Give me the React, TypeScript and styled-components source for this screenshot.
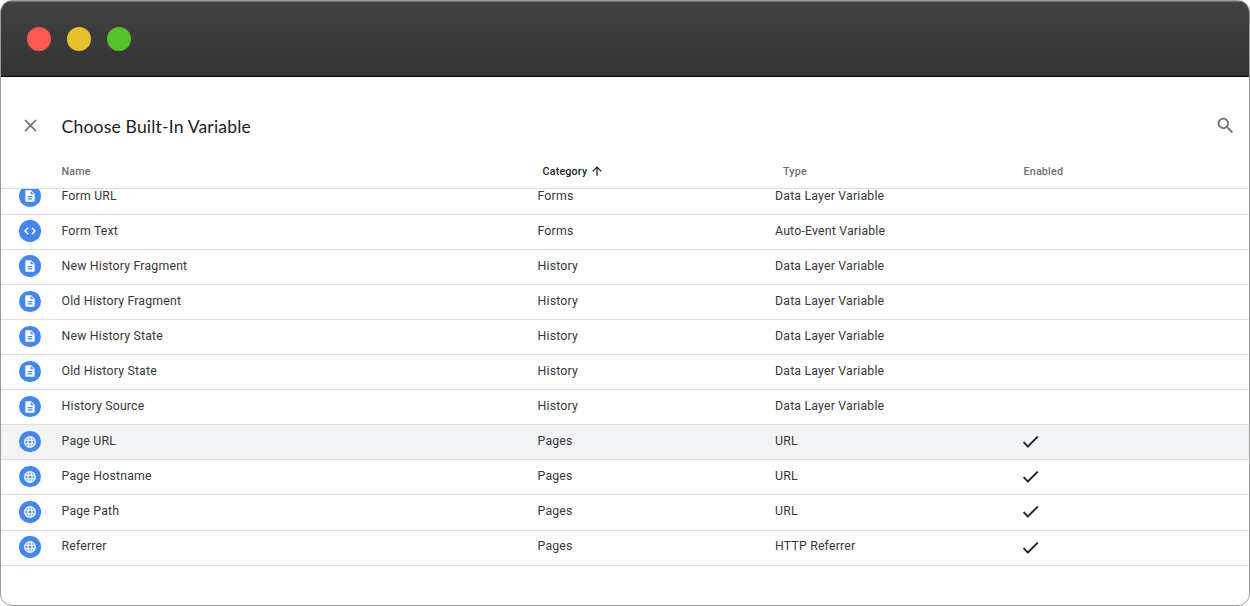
import React from "react";
import styled, { createGlobalStyle } from "styled-components";

const GlobalStyle = createGlobalStyle`
  *, *::before, *::after { box-sizing: border-box; }
  body { margin: 0; background: #fff; font-family: Roboto, sans-serif; }
`;

const Window = styled.div`
  display: flex;
  flex-direction: column;
  width: 1250px;
  height: 606px;
  border: 1px solid #9b9b9b;
  border-radius: 12px;
  background: #fff;
  overflow: hidden;
`;

const TitleBar = styled.div`
  display: flex;
  align-items: center;
  gap: 16px;
  height: 76px;
  flex: none;
  padding: 0 26px;
  background: linear-gradient(#424242, #333);
  border-bottom: 1px solid #000;
  box-shadow: inset 0 1px 0 #6e6f6e;
`;

const Light = styled.span<{ $color: string }>`
  width: 24px;
  height: 24px;
  border-radius: 50%;
  background: ${(p) => p.$color};
`;

const PanelHeader = styled.header`
  display: flex;
  align-items: center;
  height: 77px;
  flex: none;
  padding: 20px 13px 0 18.5px;
`;

const IconButton = styled.button`
  display: flex;
  padding: 0;
  border: 0;
  background: none;
  color: #757575;
`;

const Title = styled.h1`
  flex: 1;
  margin: 3px 0 0 21px;
  font: 400 17.6px/24px Lato, sans-serif;
  letter-spacing: 0.16px;
  color: #202124;
`;

const HeadRow = styled.div`
  display: grid;
  grid-template-columns: 60.5px 481px 240.5px 240.5px 1fr;
  height: 35px;
  flex: none;
  border-bottom: 1px solid #dadce0;
`;

const HeadCell = styled.div<{ $active?: boolean }>`
  display: flex;
  align-items: center;
  gap: 3px;
  font-size: 10.7px;
  font-weight: 500;
  letter-spacing: 0.2px;
  color: ${(p) => (p.$active ? "#202124" : "#6b6f73")};
`;

const Body = styled.div`
  flex: 1;
  overflow: hidden;
`;

const Rows = styled.div`
  margin-top: -9.4px;
`;

const Row = styled.div<{ $hover?: boolean }>`
  display: grid;
  grid-template-columns: 60.5px 476px 237.5px 244.5px 1fr;
  height: 35.1px;
  border-bottom: 1px solid #e0e0e0;
  background: ${(p) => (p.$hover ? "#f1f3f4" : "#fff")};
`;

const Cell = styled.div`
  padding-top: 6.9px;
  font-size: 12.3px;
  line-height: 18px;
  letter-spacing: 0.19px;
  color: #35383b;
  white-space: nowrap;
`;

const BadgeCell = styled.div`
  padding: 5.7px 0 0 18.3px;
`;

const Badge = styled.div`
  display: flex;
  align-items: center;
  justify-content: center;
  width: 21.4px;
  height: 21.4px;
  border-radius: 50%;
  background: #4285f4;
  color: #fff;
`;

const CheckCell = styled.div`
  padding-top: 6px;
  color: #202124;
`;

const paths = {
  doc: "M14 2H6c-1.1 0-2 .9-2 2v16c0 1.1.9 2 2 2h12c1.1 0 2-.9 2-2V8l-6-6zm2 16H8v-2h8v2zm0-4H8v-2h8v2zm-3-5V3.5L18.5 9H13z",
  code: "M9.4 16.6L4.8 12l4.6-4.6L8 6l-6 6 6 6 1.4-1.4zm5.2 0l4.6-4.6-4.6-4.6L16 6l6 6-6 6-1.4-1.4z",
  globe:
    "M11.99 2C6.47 2 2 6.48 2 12s4.47 10 9.99 10C17.52 22 22 17.52 22 12S17.52 2 11.99 2zm6.93 6h-2.95c-.32-1.25-.78-2.45-1.38-3.56 1.84.63 3.37 1.91 4.33 3.56zM12 4.04c.83 1.2 1.48 2.53 1.91 3.96h-3.82c.43-1.43 1.08-2.76 1.91-3.96zM4.26 14C4.1 13.36 4 12.69 4 12s.1-1.36.26-2h3.38c-.08.66-.14 1.32-.14 2s.06 1.34.14 2H4.26zm.82 2h2.95c.32 1.25.78 2.45 1.38 3.56-1.84-.63-3.37-1.9-4.33-3.56zm2.95-8H5.08c.96-1.66 2.49-2.93 4.33-3.56C8.81 5.55 8.35 6.75 8.03 8zM12 19.96c-.83-1.2-1.48-2.53-1.91-3.96h3.82c-.43 1.43-1.08 2.76-1.91 3.96zM14.34 14H9.66c-.09-.66-.16-1.32-.16-2s.07-1.35.16-2h4.68c.09.65.16 1.32.16 2s-.07 1.34-.16 2zm.25 5.56c.6-1.11 1.06-2.31 1.38-3.56h2.95c-.96 1.65-2.49 2.93-4.33 3.56zM16.36 14c.08-.66.14-1.32.14-2s-.06-1.34-.14-2h3.38c.16.64.26 1.31.26 2s-.1 1.36-.26 2h-3.38z",
  check: "M9 16.17L4.83 12l-1.42 1.41L9 19 21 7l-1.41-1.41z",
  close:
    "M19 6.41L17.59 5 12 10.59 6.41 5 5 6.41 10.59 12 5 17.59 6.41 19 12 13.41 17.59 19 19 17.59 13.41 12z",
  search:
    "M15.5 14h-.79l-.28-.27C15.41 12.59 16 11.11 16 9.5 16 5.91 13.09 3 9.5 3S3 5.91 3 9.5 5.91 16 9.5 16c1.61 0 3.09-.59 4.23-1.57l.27.28v.79l5 4.99L20.49 19l-4.99-5zm-6 0C7.01 14 5 11.99 5 9.5S7.01 5 9.5 5 14 7.01 14 9.5 11.99 14 9.5 14z",
  up: "M4 12l1.41 1.41L11 7.83V20h2V7.83l5.58 5.59L20 12l-8-8-8 8z",
};

type IconName = keyof typeof paths;

const Svg = styled.svg<{ $weight: number }>`
  display: block;
  flex: none;
  fill: currentColor;
  stroke: currentColor;
  stroke-width: ${(p) => p.$weight};
`;

const Icon = ({ name, size, weight = 0 }: { name: IconName; size: number; weight?: number }) => (
  <Svg width={size} height={size} viewBox="0 0 24 24" $weight={weight} aria-hidden="true">
    <path d={paths[name]} />
  </Svg>
);

const badgeWeights: Partial<Record<IconName, number>> = { code: 0.5, globe: 0.4 };

interface Variable {
  icon: IconName;
  name: string;
  category: string;
  type: string;
  enabled?: boolean;
  hover?: boolean;
}

const variables: Variable[] = [
  { icon: "doc", name: "Form URL", category: "Forms", type: "Data Layer Variable" },
  { icon: "code", name: "Form Text", category: "Forms", type: "Auto-Event Variable" },
  { icon: "doc", name: "New History Fragment", category: "History", type: "Data Layer Variable" },
  { icon: "doc", name: "Old History Fragment", category: "History", type: "Data Layer Variable" },
  { icon: "doc", name: "New History State", category: "History", type: "Data Layer Variable" },
  { icon: "doc", name: "Old History State", category: "History", type: "Data Layer Variable" },
  { icon: "doc", name: "History Source", category: "History", type: "Data Layer Variable" },
  { icon: "globe", name: "Page URL", category: "Pages", type: "URL", enabled: true, hover: true },
  { icon: "globe", name: "Page Hostname", category: "Pages", type: "URL", enabled: true },
  { icon: "globe", name: "Page Path", category: "Pages", type: "URL", enabled: true },
  { icon: "globe", name: "Referrer", category: "Pages", type: "HTTP Referrer", enabled: true },
];

export default function App() {
  return (
    <>
      <GlobalStyle />
      <Window>
        <TitleBar>
          <Light $color="#ff5a52" />
          <Light $color="#e6c029" />
          <Light $color="#54c22b" />
        </TitleBar>
        <PanelHeader>
          <IconButton aria-label="Close">
            <Icon name="close" size={21} />
          </IconButton>
          <Title>Choose Built-In Variable</Title>
          <IconButton aria-label="Search">
            <Icon name="search" size={21} weight={0.15} />
          </IconButton>
        </PanelHeader>
        <HeadRow>
          <span />
          <HeadCell>Name</HeadCell>
          <HeadCell $active>
            Category
            <Icon name="up" size={14} weight={0.15} />
          </HeadCell>
          <HeadCell>Type</HeadCell>
          <HeadCell>Enabled</HeadCell>
        </HeadRow>
        <Body>
          <Rows>
            {variables.map((v) => (
              <Row key={v.name} $hover={v.hover}>
                <BadgeCell>
                  <Badge>
                    <Icon name={v.icon} size={14} weight={badgeWeights[v.icon]} />
                  </Badge>
                </BadgeCell>
                <Cell>{v.name}</Cell>
                <Cell>{v.category}</Cell>
                <Cell>{v.type}</Cell>
                <CheckCell>{v.enabled && <Icon name="check" size={21} weight={0.2} />}</CheckCell>
              </Row>
            ))}
          </Rows>
        </Body>
      </Window>
    </>
  );
}
